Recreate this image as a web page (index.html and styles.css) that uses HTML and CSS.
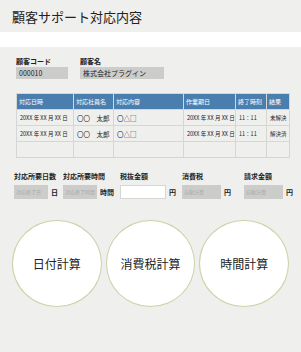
FILE: index.html
```html
<!DOCTYPE html>
<html lang="ja">

<head>
    <meta charset="utf-8">
    <meta name="viewport" content="width=device-width, initial-scale=1.0">
    <title>顧客サポート対応内容</title>
    <link rel="stylesheet" href="styles.css">
</head>

<body>
    <header class="titel">
        <h1>顧客サポート対応内容</h1>
    </header>
    <div class="band"></div>

    <main>
        <section class="kunde">
            <div class="felt">
                <label>顧客コード</label>
                <div class="boks kode">000010</div>
            </div>
            <div class="felt">
                <label>顧客名</label>
                <div class="boks navn">株式会社プラグイン</div>
            </div>
        </section>

        <table class="liste">
            <tr>
                <th class="c1">対応日時</th>
                <th class="c2">対応社員名</th>
                <th class="c3">対応内容</th>
                <th class="c4">作業期日</th>
                <th class="c5">終了時刻</th>
                <th class="c6">結果</th>
            </tr>
            <tr>
                <td>20XX 年 XX 月 XX 日</td>
                <td class="navn-celle">〇〇　太郎</td>
                <td class="navn-celle">〇△□</td>
                <td>20XX 年 XX 月 XX 日</td>
                <td>11：11</td>
                <td>未解決</td>
            </tr>
            <tr>
                <td>20XX 年 XX 月 XX 日</td>
                <td class="navn-celle">〇〇　太郎</td>
                <td class="navn-celle">〇△□</td>
                <td>20XX 年 XX 月 XX 日</td>
                <td>11：11</td>
                <td>解決済</td>
            </tr>
            <tr>
                <td></td>
                <td></td>
                <td></td>
                <td></td>
                <td></td>
                <td></td>
            </tr>
        </table>

        <section class="beregn">
            <div class="felt">
                <label>対応所要日数</label>
                <div class="linje"><div class="boks lille">対応終了日</div><span>日</span></div>
            </div>
            <div class="felt">
                <label>対応所要時間</label>
                <div class="linje"><div class="boks lille">対応終了時間</div><span>時間</span></div>
            </div>
            <div class="felt">
                <label>税抜金額</label>
                <div class="linje"><div class="boks hvid"></div><span>円</span></div>
            </div>
            <div class="felt">
                <label>消費税</label>
                <div class="linje"><div class="boks lille">自動計算</div><span>円</span></div>
            </div>
            <div class="felt">
                <label>請求金額</label>
                <div class="linje"><div class="boks lille">自動計算</div><span>円</span></div>
            </div>
        </section>

        <nav class="knapper">
            <button class="rund">日付計算</button>
            <button class="rund">消費税計算</button>
            <button class="rund">時間計算</button>
        </nav>
    </main>
</body>

</html>
```

FILE: styles.css
```css
body {
    margin: 0;
    background-color: #efefed;
    font-family: "Noto Sans CJK JP", "Noto Sans", sans-serif;
    color: #222;
    height: 352px;
    overflow: hidden;
}

.titel {
    padding: 8px 12px 0 12px;
    height: 24px;
}

.titel h1 {
    margin: 0;
    font-size: 13px;
    font-weight: 400;
    line-height: 18px;
}

.band {
    height: 15px;
    background-color: white;
}

main {
    padding: 0 12px 0 16px;
}

.kunde {
    display: flex;
    gap: 12px;
    margin-top: 10px;
}

.felt {
    display: flex;
    flex-direction: column;
}

label {
    font-size: 7px;
    font-weight: 700;
    line-height: 9px;
    height: 10px;
}

.boks {
    background-color: #cccccb;
    font-size: 7px;
    line-height: 12px;
    height: 12px;
    padding-left: 3px;
    box-sizing: border-box;
}

.kode {
    width: 52px;
}

.navn {
    width: 84px;
}

.liste {
    margin-top: 14px;
    border-collapse: collapse;
    width: 273px;
    font-size: 6px;
    table-layout: fixed;
}

.liste th,
.liste td {
    box-sizing: border-box;
    padding: 0 0 0 2px;
    border: 1px solid #d6d6d4;
    white-space: nowrap;
    overflow: hidden;
}

.liste th {
    background-color: #4a7eaf;
    color: white;
    font-weight: 400;
    text-align: left;
    height: 16px;
}

.liste td {
    height: 16px;
    font-size: 5.5px;
    padding-left: 3px;
}

.liste .navn-celle {
    font-size: 6.5px;
}

.c1 { width: 57px; }
.c2 { width: 40px; }
.c3 { width: 70px; }
.c4 { width: 52px; }
.c5 { width: 31px; }
.c6 { width: 23px; }

.beregn {
    display: flex;
    margin-top: 14px;
    margin-left: -2px;
}

.beregn label {
    margin-bottom: 3px;
}

.beregn .felt {
    flex-shrink: 0;
}

.beregn .felt:nth-child(1) { width: 49px; }
.beregn .felt:nth-child(2) { width: 57px; }
.beregn .felt:nth-child(3) { width: 62px; }
.beregn .felt:nth-child(4) { width: 62px; }

.linje {
    display: flex;
    align-items: center;
}

.linje span {
    font-size: 7px;
    font-weight: 700;
    margin-left: 3px;
}

.lille {
    width: 34px;
    height: 14px;
    line-height: 14px;
    color: #aaa;
    font-size: 5px;
    padding-left: 2px;
    white-space: nowrap;
    overflow: hidden;
}

.beregn .felt:nth-child(4) .lille,
.beregn .felt:nth-child(5) .lille {
    width: 39px;
}

.hvid {
    width: 46px;
    height: 14px;
    background-color: white;
    border: 1px solid #d6d6d4;
}

.knapper {
    display: flex;
    gap: 4px;
    margin-top: 21px;
    margin-left: -4px;
}

.rund {
    width: 91px;
    height: 87px;
    border-radius: 50%;
    background-color: white;
    border: 1px solid #c8d3a6;
    font-family: inherit;
    font-size: 12px;
    color: #222;
    padding: 0;
}
```
